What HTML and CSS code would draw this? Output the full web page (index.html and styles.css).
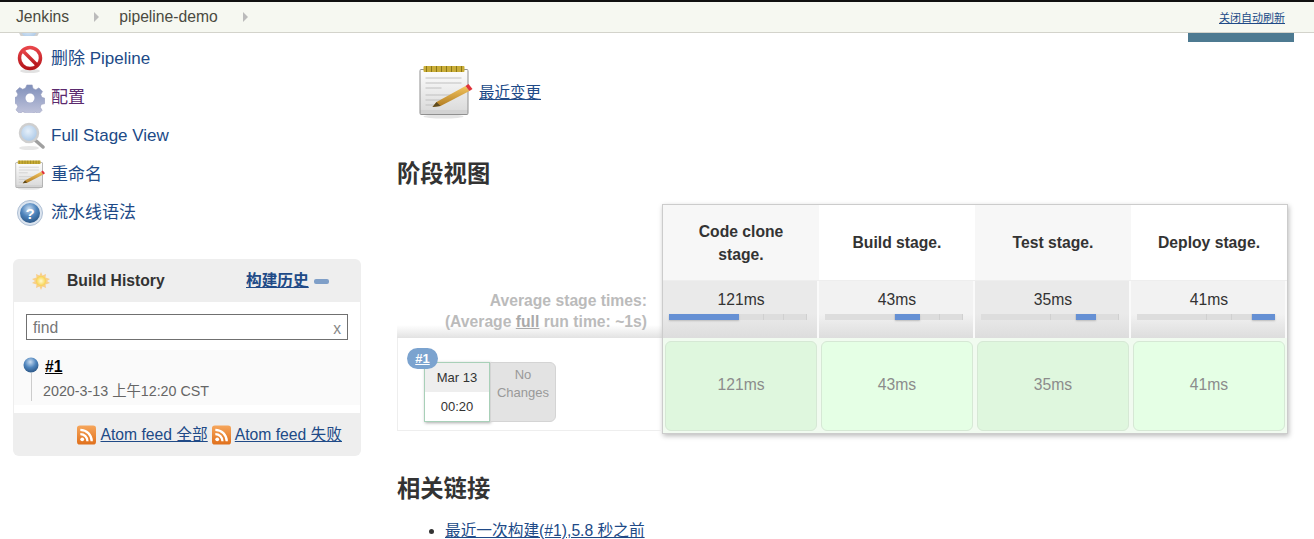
FILE: index.html
```html
<!DOCTYPE html>
<html>
  <head>
    <meta charset="utf-8" />
    <title>pipeline-demo</title>
    <link rel="stylesheet" href="styles.css">
  </head>
  <body>
    <svg class="defs" width="0" height="0">
      <defs>
        <linearGradient id="paper" x1="0" y1="0" x2="0" y2="1">
          <stop offset="0" stop-color="#fdfdfd" />
          <stop offset="1" stop-color="#dcdcdc" />
        </linearGradient>
        <linearGradient id="pencil" x1="0" y1="0" x2="0" y2="1">
          <stop offset="0" stop-color="#f3c560" />
          <stop offset="1" stop-color="#b07a20" />
        </linearGradient>
        <linearGradient id="gearFill" x1="0" y1="0" x2="0" y2="1">
          <stop offset="0" stop-color="#7f8fba" />
          <stop offset="1" stop-color="#c6c8de" />
        </linearGradient>
        <radialGradient id="ballFill" cx="0.45" cy="0.3" r="0.75">
          <stop offset="0" stop-color="#c9dcf0" />
          <stop offset="0.5" stop-color="#4f85bd" />
          <stop offset="1" stop-color="#27517f" />
        </radialGradient>
        <radialGradient id="lens" cx="0.45" cy="0.4" r="0.6">
          <stop offset="0" stop-color="#e6f0fa" />
          <stop offset="1" stop-color="#a9c7e6" />
        </radialGradient>
        <radialGradient id="sunFill" cx="0.5" cy="0.5" r="0.5">
          <stop offset="0" stop-color="#fffbd0" />
          <stop offset="1" stop-color="#f7d24e" />
        </radialGradient>
        <linearGradient id="rssFill" x1="0" y1="0" x2="0" y2="1">
          <stop offset="0" stop-color="#f6a65c" />
          <stop offset="1" stop-color="#e0701c" />
        </linearGradient>
        <linearGradient id="stopFill" x1="0" y1="0" x2="0" y2="1">
          <stop offset="0" stop-color="#e8454a" />
          <stop offset="1" stop-color="#b5161b" />
        </linearGradient>
        <symbol id="notepad" viewBox="0 0 54 54">
          <ellipse cx="25" cy="51.500" rx="20" ry="2" fill="#e4e4e4" />
          <rect x="1" y="4" width="49" height="46" rx="2" fill="#8f8f8f" />
          <rect x="2" y="5" width="47" height="40" fill="url(#paper)" />
          <rect x="2" y="45" width="47" height="4" fill="#d2d2d2" />
          <rect x="5" y="1" width="41" height="6" rx="1" fill="#c9ad38" />
          <path d="M8 1v6M13 1v6M18 1v6M23 1v6M28 1v6M33 1v6M38 1v6M43 1v6" stroke="#8a7719" stroke-width="1" />
          <path d="M7 13h36M7 18h36M7 23h16M7 30h30M7 35h18M7 40h12" stroke="#c0c0c0" stroke-width="1" />
          <path d="M18 37l29-16 4 5-29 15-8 1z" fill="url(#pencil)" />
          <path d="M18 37l4 4-8 1z" fill="#5c4a20" />
          <path d="M47 21l3-2 4 5-3 2z" fill="#e0323a" />
        </symbol>
        <symbol id="stop" viewBox="0 0 30 30">
          <ellipse cx="15" cy="27" rx="10" ry="2" fill="#e2e2e2" />
          <circle cx="15" cy="14" r="10.500" fill="#fff" stroke="url(#stopFill)" stroke-width="3.500" />
          <path d="M8 7l14 14" stroke="url(#stopFill)" stroke-width="3.500" />
        </symbol>
        <symbol id="gear" viewBox="0 0 30 30">
          <path d="M12 1h6l1 4 3 1.300 3.500-2 4 4-2 3.500 1.300 3 3.200 1v6l-4 1-1 3 2 3.500-4 4-3.500-2-3 1.200-1 3.500h-6l-1-4-3-1.200-3.500 2-4-4 2-3.500-1.200-3-3.800-1v-6l4-1 1-3-2-3.500 4-4 3.500 2 3-1.300z" transform="translate(1 1) scale(.9)" fill="url(#gearFill)" stroke="#9a9fbe" stroke-width=".6" />
          <circle cx="15" cy="15" r="4.500" fill="#fff" />
        </symbol>
        <symbol id="search" viewBox="0 0 30 30">
          <ellipse cx="14" cy="27" rx="10" ry="2" fill="#e6e6e6" />
          <path d="M20 19l8 7" stroke="#a0a0a0" stroke-width="3.500" stroke-linecap="round" />
          <circle cx="14" cy="12" r="9" fill="url(#lens)" stroke="#cfcfcf" stroke-width="2.500" />
        </symbol>
        <symbol id="help" viewBox="0 0 30 30">
          <circle cx="15" cy="15" r="12.500" fill="#dbe4ef" stroke="#aebfd4" />
          <circle cx="15" cy="15" r="10" fill="url(#ballFill)" />
          <text x="15" y="20.500" class="help-mark">?</text>
        </symbol>
        <symbol id="ball" viewBox="0 0 16 16">
          <circle cx="8" cy="8" r="7.500" fill="url(#ballFill)" />
        </symbol>
        <symbol id="sun" viewBox="0 0 18 18">
          <path d="M9 0l1.500 3.500L14 2l-.5 3.500L18 7l-3 2 3 2-4.500 1.500.5 3.500-3.500-1.500L9 18l-1.500-3.500L4 16l.5-3.500L0 11l3-2-3-2 4.500-1.500L4 2l3.500 1.500z" fill="#f8cf8a" />
          <circle cx="9" cy="9" r="5" fill="url(#sunFill)" />
        </symbol>
        <symbol id="rss" viewBox="0 0 20 20">
          <rect width="20" height="20" rx="3" fill="url(#rssFill)" />
          <circle cx="5.500" cy="14.500" r="2" fill="#fff" />
          <path d="M3.500 9a7.500 7.500 0 0 1 7.500 7.500M3.500 4.500a12 12 0 0 1 12 12" fill="none" stroke="#fff" stroke-width="2.400" />
        </symbol>
      </defs>
    </svg>

    <div class="topbar">
      <div class="crumbs">
        <a class="crumb">Jenkins</a>
        <span class="crumb-arrow"></span>
        <a class="crumb">pipeline-demo</a>
        <span class="crumb-arrow"></span>
      </div>
      <a class="refresh-link" href="#">关闭自动刷新</a>
    </div>

    <div class="page">
      <div class="sidebar">
        <div class="cut-icon"><svg class="task-icon"><use href="#search" /></svg></div>
        <div class="tasks">
          <a class="task"><svg class="task-icon"><use href="#stop" /></svg>删除 Pipeline</a>
          <a class="task task-visited"><svg class="task-icon"><use href="#gear" /></svg>配置</a>
          <a class="task"><svg class="task-icon"><use href="#search" /></svg>Full Stage View</a>
          <a class="task"><svg class="task-icon"><use href="#notepad" /></svg>重命名</a>
          <a class="task"><svg class="task-icon"><use href="#help" /></svg>流水线语法</a>
        </div>

        <div class="history">
          <div class="history-head">
            <svg class="sun-icon"><use href="#sun" /></svg>
            <span class="history-title">Build History</span>
            <a class="history-link" href="#">构建历史</a>
            <span class="collapse"></span>
          </div>
          <div class="history-body">
            <div class="search-box">
              <span>find</span>
              <span class="search-x">x</span>
            </div>
            <div class="build-row">
              <div class="build-marker">
                <svg class="ball-icon"><use href="#ball" /></svg>
                <span class="build-line"></span>
              </div>
              <div>
                <a class="build-num" href="#">#1</a>
                <div class="build-date">2020-3-13 上午12:20 CST</div>
              </div>
            </div>
          </div>
          <div class="history-foot">
            <svg class="rss-icon"><use href="#rss" /></svg>
            <a href="#">Atom feed 全部</a>
            <svg class="rss-icon rss-second"><use href="#rss" /></svg>
            <a href="#">Atom feed 失败</a>
          </div>
        </div>
      </div>

      <div class="main">
        <div class="strip-row"><div class="strip"></div></div>

        <div class="changes">
          <svg class="changes-icon"><use href="#notepad" /></svg>
          <a class="changes-link" href="#">最近变更</a>
        </div>

        <h2 class="stage-heading">阶段视图</h2>

        <div class="stage-view">
          <div class="stage-left">
            <div class="avg-label">
              Average stage times:<br />
              (Average <u>full</u> run time: ~1s)
            </div>
            <div class="build-cell">
              <span class="badge">#1</span>
              <div class="build-card">
                <div class="card-date">Mar 13</div>
                <div class="card-time">00:20</div>
              </div>
              <div class="no-changes">No Changes</div>
            </div>
          </div>

          <div class="stage-table">
            <div class="head-cell odd">Code clone stage.</div>
            <div class="head-cell">Build stage.</div>
            <div class="head-cell odd">Test stage.</div>
            <div class="head-cell">Deploy stage.</div>

            <div class="avg-cell odd">121ms
              <div class="bar">
                <span class="seg on" style="width: 70px"></span>
                <span class="seg" style="width: 25px"></span>
                <span class="seg" style="width: 20px"></span>
                <span class="seg" style="width: 23px"></span>
              </div>
            </div>
            <div class="avg-cell">43ms
              <div class="bar">
                <span class="seg" style="width: 70px"></span>
                <span class="seg on" style="width: 25px"></span>
                <span class="seg" style="width: 20px"></span>
                <span class="seg" style="width: 23px"></span>
              </div>
            </div>
            <div class="avg-cell odd">35ms
              <div class="bar">
                <span class="seg" style="width: 70px"></span>
                <span class="seg" style="width: 25px"></span>
                <span class="seg on" style="width: 20px"></span>
                <span class="seg" style="width: 23px"></span>
              </div>
            </div>
            <div class="avg-cell">41ms
              <div class="bar">
                <span class="seg" style="width: 70px"></span>
                <span class="seg" style="width: 25px"></span>
                <span class="seg" style="width: 20px"></span>
                <span class="seg on" style="width: 23px"></span>
              </div>
            </div>

            <div class="time-cell odd"><div class="time-box">121ms</div></div>
            <div class="time-cell"><div class="time-box">43ms</div></div>
            <div class="time-cell odd"><div class="time-box">35ms</div></div>
            <div class="time-cell"><div class="time-box">41ms</div></div>
          </div>
        </div>

        <h2 class="links-heading">相关链接</h2>
        <ul class="links">
          <li><a href="#">最近一次构建(#1),5.8 秒之前</a></li>
        </ul>
      </div>
    </div>
  </body>
</html>
```

FILE: styles.css
```css
html,
body {
  height: 539px;
  overflow: hidden;
}

body {
  margin: 0;
  background: #fff;
  color: #333;
  font-family: "Liberation Sans", "Noto Sans CJK SC", sans-serif;
  font-size: 15.7px;
  line-height: 20px;
}

a {
  color: #204a87;
}

.defs {
  display: block;
  height: 0;
}

.help-mark {
  fill: #fff;
  font-size: 15px;
  font-weight: bold;
  text-anchor: middle;
}

/* top bar */
.topbar {
  display: flex;
  justify-content: space-between;
  align-items: center;
  height: 30px;
  padding: 0 29px 0 16px;
  border-top: 2px solid #111;
  border-bottom: 1px solid #d3d3cb;
  background: #f6f8f1;
}

.crumbs {
  display: flex;
  align-items: center;
}

.crumb {
  color: #4a4a40;
}

.crumb-arrow {
  width: 0;
  height: 0;
  margin: 0 20px 0 25px;
  border-left: 5px solid #bbb;
  border-top: 5px solid transparent;
  border-bottom: 5px solid transparent;
}

.refresh-link {
  margin-top: 2px;
  font-size: 11px;
}

/* page columns */
.page {
  display: flex;
}

.sidebar {
  flex: none;
  width: 380px;
}

.cut-icon {
  height: 3px;
  padding-left: 15px;
  overflow: hidden;
}

.cut-icon .task-icon {
  margin-top: -26px;
}

.tasks {
  display: flex;
  flex-direction: column;
  padding: 4px 0 0 15px;
}

.task {
  display: flex;
  align-items: center;
  gap: 6px;
  height: 38.500px;
  font-size: 17px;
}

.task-visited {
  color: #5b2a6e;
}

.task-icon {
  flex: none;
  width: 30px;
  height: 30px;
}

/* build history */
.history {
  width: 348px;
  margin: 26px 0 0 13px;
  border-radius: 6px;
  background: #eee;
  overflow: hidden;
}

.history-head {
  display: flex;
  align-items: center;
  box-sizing: border-box;
  height: 43px;
  padding: 2px 0 0 19px;
}

.sun-icon {
  width: 18px;
  height: 18px;
}

.history-title {
  width: 179px;
  margin-left: 17px;
  font-weight: bold;
}

.history-link {
  font-weight: bold;
}

.collapse {
  width: 15px;
  height: 5px;
  margin-left: 5px;
  border-radius: 2px;
  background: #7f9fc8;
}

.history-body {
  margin: 0 1px;
  padding: 12px 0 8px;
  background: #fff;
}

.search-box {
  display: flex;
  justify-content: space-between;
  align-items: center;
  box-sizing: border-box;
  height: 26px;
  margin: 0 12px 10px;
  padding: 2px 6px 0;
  border: 1px solid #707070;
  color: #777;
}

.search-x {
  margin-top: 2px;
  color: #888;
}

.build-row {
  display: flex;
  height: 55px;
  padding-left: 9px;
  background: #fafafa;
}

.build-marker {
  display: flex;
  flex-direction: column;
  align-items: center;
  width: 16px;
  margin-top: 7px;
  margin-right: 6px;
}

.ball-icon {
  flex: none;
  width: 16px;
  height: 16px;
}

.build-line {
  width: 1px;
  height: 28px;
  background: #ccc;
}

.build-num {
  display: inline-block;
  margin-top: 7px;
  color: #000;
  font-weight: bold;
}

.build-date {
  margin-top: 4px;
  margin-left: -2px;
  color: #666;
  font-size: 14.300px;
}

.history-foot {
  display: flex;
  justify-content: flex-end;
  align-items: center;
  box-sizing: border-box;
  height: 43px;
  padding: 2px 19px 0 0;
}

.rss-icon {
  width: 19px;
  height: 20px;
  margin-right: 5px;
}

.rss-second {
  margin-left: 4px;
  margin-right: 4px;
}

/* main column */
.main {
  flex: 1;
  min-width: 0;
  padding-left: 17px;
}

.strip-row {
  display: flex;
  justify-content: flex-end;
  padding-right: 20px;
}

.strip {
  width: 106px;
  height: 9px;
  background: #4d7a91;
}

.changes {
  display: flex;
  align-items: center;
  gap: 6px;
  margin: 23px 0 0 21px;
  font-size: 15.500px;
}

.changes-icon {
  width: 55px;
  height: 54px;
}

.changes-link {
  margin-top: 2px;
}

.stage-heading,
.links-heading {
  margin: 0;
  color: #333;
  font-size: 23.300px;
  line-height: 32px;
}

.stage-heading {
  margin-top: 39px;
}

.links-heading {
  margin-top: 39px;
}

.links {
  margin: 16px 0 0;
  padding-left: 48px;
}

/* stage view */
.stage-view {
  display: flex;
  margin-top: 14px;
}

.stage-left {
  flex: none;
  width: 265px;
}

.avg-label {
  box-sizing: border-box;
  height: 134px;
  padding: 86px 15px 0 0;
  background: linear-gradient(#fff 121px, #e2e2e2);
  color: #bbb;
  font-weight: bold;
  line-height: 21px;
  text-align: right;
}

.avg-label u {
  color: #aaa;
}

.build-cell {
  position: relative;
  display: flex;
  box-sizing: border-box;
  height: 93px;
  padding: 24px 0 0 26px;
  border-left: 1px solid #eee;
  border-bottom: 1px solid #eee;
}

.badge {
  position: absolute;
  top: 10px;
  left: 9px;
  width: 31px;
  height: 21px;
  border-radius: 11px;
  background: #7ba3cf;
  color: #fff;
  font-size: 13px;
  font-weight: bold;
  line-height: 21px;
  text-align: center;
  text-decoration: underline;
}

.build-card {
  box-sizing: border-box;
  width: 66px;
  height: 60px;
  border: 1px solid #a8d0b8;
  box-shadow: 1px 1px 3px #aaa;
  font-size: 13px;
  text-align: center;
}

.card-date {
  height: 29px;
  background: #eee;
  line-height: 29px;
}

.card-time {
  background: #fff;
  line-height: 29px;
}

.no-changes {
  box-sizing: border-box;
  width: 66px;
  height: 60px;
  padding: 3px 4px 0;
  border: 1px solid #d4d4d4;
  border-radius: 0 6px 6px 0;
  background: #e3e3e3;
  color: #999;
  font-size: 13px;
  line-height: 18px;
  text-align: center;
}

.stage-table {
  display: grid;
  grid-template-columns: repeat(4, 156px);
  grid-template-rows: 76px 57px 95px;
  border: 1px solid #ccc;
  box-shadow: 1px 2px 5px #bbb;
}

.head-cell {
  display: flex;
  align-items: center;
  justify-content: center;
  padding: 0 20px;
  background: #fff;
  border-bottom: 1px solid #eee;
  color: #333;
  font-weight: bold;
  line-height: 23px;
  text-align: center;
}

.head-cell.odd {
  background: #f7f7f7;
}

.avg-cell {
  padding: 9px 6px 0;
  background: linear-gradient(#f2f2f2 33px, #ddd);
  box-shadow: inset -2px 0 #fafafa;
  text-align: center;
}

.avg-cell.odd {
  background: linear-gradient(#eaeaea 33px, #ddd);
}

.bar {
  display: flex;
  width: 138px;
  height: 6px;
  margin-top: 4px;
  background: #ddd;
}

.seg {
  flex: none;
  height: 6px;
  box-shadow: inset -1px 0 #d0d0d0;
}

.seg.on {
  background: #6590d4;
  box-shadow: 0 1px 2px #bbb;
}

.time-cell {
  padding: 3px 2px 2px;
  background: #f1fbf0;
}

.time-box {
  display: flex;
  align-items: center;
  justify-content: center;
  box-sizing: border-box;
  height: 90px;
  padding-bottom: 2px;
  border: 1px solid #d6e8d5;
  border-radius: 6px;
  background: #e5ffe5;
  color: #8c8c8c;
}

.time-cell.odd .time-box {
  background: #dff7de;
}
```
